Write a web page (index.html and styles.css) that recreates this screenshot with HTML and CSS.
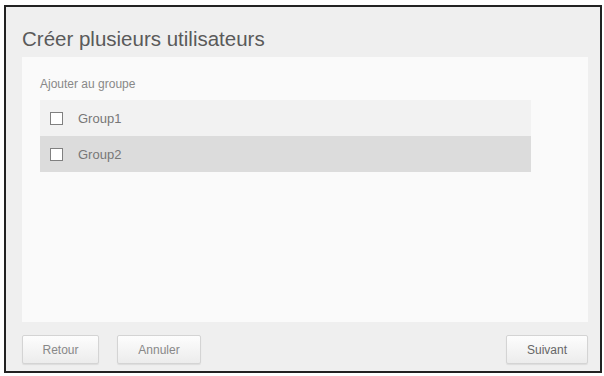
FILE: index.html
```html
<!DOCTYPE html>
<html lang="fr">
<head>
    <meta charset="UTF-8">
    <meta name="viewport" content="width=device-width, initial-scale=1.0">
    <title>Créer plusieurs utilisateurs</title>
    <link rel="stylesheet" href="styles.css">
</head>
<body>
    <div class="dialog">
        <h1 class="title">Créer plusieurs utilisateurs</h1>

        <div class="panel">
            <div class="label">Ajouter au groupe</div>
            <!-- group list -->
            <div class="groups">
                <label class="group">
                    <span class="box"></span>
                    <span>Group1</span>
                </label>
                <label class="group selected">
                    <span class="box"></span>
                    <span>Group2</span>
                </label>
            </div>
        </div>

        <div class="footer">
            <button class="btn">Retour</button>
            <button class="btn">Annuler</button>
            <button class="btn next">Suivant</button>
        </div>
    </div>
</body>
</html>
```

FILE: styles.css
```css
* {
    box-sizing: border-box;
    margin: 0;
    padding: 0;
    font-family: 'Liberation Sans', Arial, sans-serif;
}

body {
    background: #fff;
}

.dialog {
    margin: 5px 2px 3px 4px;
    width: 598px;
    height: 368px;
    border: 2px solid #222;
    background: #efefef;
    display: flex;
    flex-direction: column;
}

.title {
    height: 50px;
    padding: 21px 0 0 16px;
    font-size: 20.5px;
    font-weight: normal;
    line-height: 22px;
    color: #5a5a5a;
}

.panel {
    flex: 1;
    margin: 0 12px 0 16px;
    background: #fafafa;
    padding: 19px 57px 0 18px;
}

.label {
    font-size: 12px;
    line-height: 16px;
    color: #888;
    margin-bottom: 8px;
}

.group {
    display: flex;
    align-items: center;
    height: 36px;
    padding-left: 10px;
    background: #f2f2f2;
    font-size: 13px;
    color: #777;
}

.group.selected {
    background: #dcdcdc;
}

.box {
    width: 13px;
    height: 13px;
    border: 1.5px solid #808080;
    background: #fff;
    margin-right: 15px;
}

.footer {
    display: flex;
    gap: 18px;
    padding: 13px 12px 7px 16px;
}

.btn {
    height: 29px;
    padding: 0 19px;
    font-size: 12px;
    color: #888;
    background: linear-gradient(#fdfdfd, #ececec);
    border: 1px solid #d4d4d4;
    border-radius: 2px;
    box-shadow: 0 1px 1px rgba(0, 0, 0, 0.08);
}

.btn:first-child { width: 77px; }
.btn:nth-child(2) { width: 84px; }

.next {
    margin-left: auto;
    width: 82px;
    color: #666;
}
```
